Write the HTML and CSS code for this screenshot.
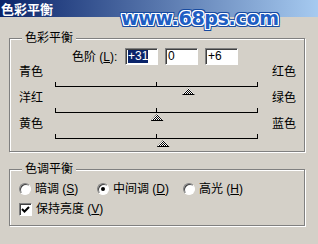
FILE: index.html
```html
<!DOCTYPE html>
<html lang="zh-CN">
   <head>
      <meta charset="UTF-8">
      <meta name="viewport" content="width=device-width, initial-scale=1.0">
      <title>色彩平衡</title>
      <link rel="stylesheet" href="styles.css">
   </head>

   <body>
      <div class="window">
         <div class="titlebar">色彩平衡</div>

         <div class="dialog">

            <!-------------COLOR BALANCE------------->
            <div class="group">
               <div class="group-title">色彩平衡</div>

               <div class="levels">
                  <span class="levels-label">色阶 (<u>L</u>):</span>
                  <div class="field"><span class="selected">+31</span></div>
                  <div class="field">0</div>
                  <div class="field">+6</div>
               </div>

               <div class="slider-row">
                  <span>青色</span>
                  <div class="track"><i class="thumb" style="left: calc(65.5% - 6px)"></i></div>
                  <span class="right">红色</span>
               </div>
               <div class="slider-row">
                  <span>洋红</span>
                  <div class="track"><i class="thumb" style="left: calc(50% - 6px)"></i></div>
                  <span class="right">绿色</span>
               </div>
               <div class="slider-row">
                  <span>黄色</span>
                  <div class="track"><i class="thumb" style="left: calc(53% - 6px)"></i></div>
                  <span class="right">蓝色</span>
               </div>
            </div>

            <!--------------TONE BALANCE------------->
            <div class="group tone">
               <div class="group-title">色调平衡</div>

               <div class="radios">
                  <label class="option"><span class="radio"></span><span>暗调 (<u>S</u>)</span></label>
                  <label class="option"><span class="radio checked"></span><span>中间调 (<u>D</u>)</span></label>
                  <label class="option"><span class="radio"></span><span>高光 (<u>H</u>)</span></label>
               </div>

               <label class="option check-row">
                  <span class="checkbox">
                     <svg width="11" height="11" viewBox="0 0 11 11"><path d="M2 5 L4.5 7.5 L9 3" fill="none" stroke="#000" stroke-width="2"/></svg>
                  </span>
                  <span>保持亮度 (<u>V</u>)</span>
               </label>
            </div>
         </div>

         <div class="watermark">www.68ps.com</div>
      </div>
   </body>
</html>
```

FILE: styles.css
```css
*{
   box-sizing: border-box;
   margin: 0;
   padding: 0;
}

body{
   background: #d4d0c8;
   font-family: "Liberation Sans", "Noto Sans CJK SC", sans-serif;
   font-size: 12px;
   color: #000;
}

.window{
   position: relative;
   width: 318px;
   height: 244px;
   overflow: hidden;
}

.titlebar{
   height: 17px;
   padding-left: 1px;
   background: linear-gradient(to right, #0a246a, #a6caf0);
   color: #fff;
   font-family: "Noto Sans CJK SC", sans-serif;
   font-weight: 700;
   font-size: 13px;
   line-height: 17px;
}

.dialog{
   padding: 21px 13px 0 9px;
}

/* etched group box */
.group{
   border: 1px solid #808080;
   box-shadow: inset 1px 1px 0 #fff, 1px 1px 0 #fff;
   padding: 0 8px 8px 9px;
}

.group-title{
   display: table;
   margin: -8px 0 0 3px;
   padding: 0 3px;
   background: #d4d0c8;
   line-height: 14px;
}

.levels{
   display: flex;
   align-items: center;
   gap: 7px;
   margin-top: 3px;
   padding-left: 53px;
   line-height: 14px;
}

.levels-label{
   width: 46px;
}

.field{
   width: 33px;
   height: 17px;
   padding: 1px 0 0 2px;
   background: #fff;
   border: 1px solid;
   border-color: #808080 #fff #fff #808080;
   box-shadow: inset 1px 1px 0 #404040;
   line-height: 13px;
}

.selected{
   display: inline-block;
   background: #0a246a;
   color: #fff;
}

.slider-row{
   display: grid;
   grid-template-columns: 36px 203px 1fr;
   height: 26px;
   line-height: 14px;
}

.slider-row:first-of-type{
   margin-top: 9px;
}

.right{
   text-align: right;
}

.track{
   position: relative;
   height: 5px;
   margin-top: 17px;
   border-bottom: 1px solid #000;
   background:
      linear-gradient(#000, #000) 0 0 / 1px 4px no-repeat,
      linear-gradient(#000, #000) 50% 0 / 1px 4px no-repeat,
      linear-gradient(#000, #000) 100% 0 / 1px 4px no-repeat;
}

.thumb{
   position: absolute;
   top: 6px;
   width: 13px;
   height: 7px;
   clip-path: polygon(50% 0, 100% 100%, 0 100%);
   background:
      linear-gradient(#000, #000) bottom / 100% 1px no-repeat,
      repeating-conic-gradient(#000 0 25%, #fff 0 50%) 0 0 / 2px 2px;
}

.tone{
   margin-top: 17px;
   padding-bottom: 9px;
}

.radios{
   display: grid;
   grid-template-columns: 78px 86px auto;
   margin-top: 6px;
}

.option{
   display: flex;
   align-items: center;
   gap: 4px;
   height: 14px;
   line-height: 14px;
}

.radio{
   position: relative;
   width: 12px;
   height: 12px;
   border-radius: 50%;
   background: #fff;
   border: 1px solid;
   border-color: #808080 #fff #fff #808080;
   box-shadow: inset 1px 1px 0 #404040;
}

.radio.checked::after{
   content: "";
   position: absolute;
   left: 3px;
   top: 3px;
   width: 4px;
   height: 4px;
   border-radius: 50%;
   background: #000;
}

.check-row{
   margin-top: 6px;
}

.checkbox{
   display: flex;
   width: 13px;
   height: 13px;
   background: #fff;
   border: 1px solid;
   border-color: #808080 #fff #fff #808080;
   box-shadow: inset 1px 1px 0 #404040;
}

.watermark{
   position: absolute;
   left: 121px;
   top: 9px;
   font-family: "DejaVu Sans", sans-serif;
   font-weight: 700;
   font-size: 19px;
   line-height: 18px;
   letter-spacing: -0.3px;
   color: #1f5fc4;
   text-shadow:
      1px 0 #fff, -1px 0 #fff, 0 1px #fff, 0 -1px #fff,
      1px 1px #fff, -1px -1px #fff, 1px -1px #fff, -1px 1px #fff,
      2px 0 #164aa0, -2px 0 #164aa0, 0 2px #164aa0, 0 -2px #164aa0,
      2px 2px #164aa0, -2px -2px #164aa0, 2px -2px #164aa0, -2px 2px #164aa0;
}
```
